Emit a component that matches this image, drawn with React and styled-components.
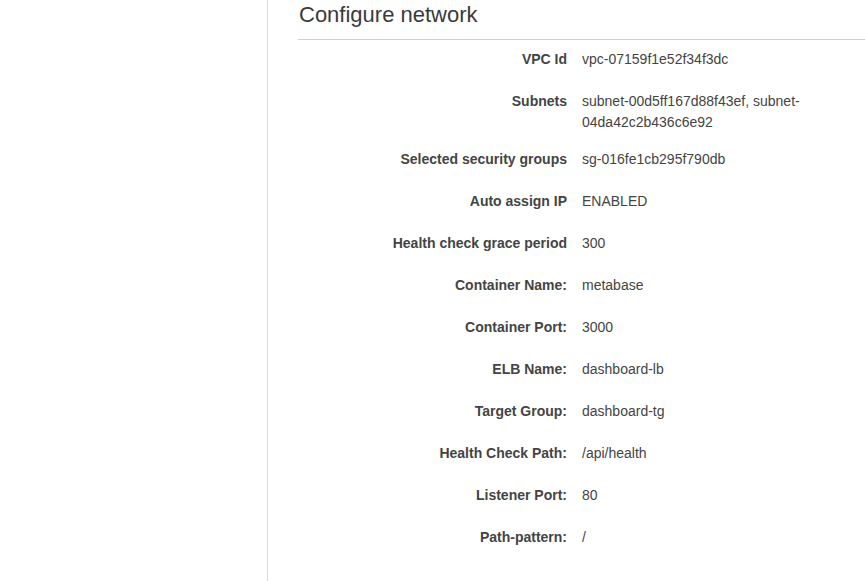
import React from "react";
import styled, { createGlobalStyle } from "styled-components";

const GlobalStyle = createGlobalStyle`
  html, body {
    margin: 0;
    padding: 0;
    background: #fff;
  }
  body {
    font-family: "Liberation Sans", Arial, sans-serif;
    color: #444;
  }
`;

const Page = styled.div`
  display: flex;
  height: 100vh;
  overflow: hidden;
`;

const Sidebar = styled.aside`
  width: 267px;
  flex-shrink: 0;
  border-right: 1px solid #dcdcdc;
`;

const Main = styled.main`
  flex: 1;
  padding-left: 30px;
  min-width: 0;
`;

const Title = styled.h2`
  margin: 0;
  padding: 2px 0 11px 1px;
  font-size: 22px;
  line-height: 26px;
  font-weight: 400;
  color: #3a3a3a;
  border-bottom: 1px solid #cfcfcf;
`;

const Details = styled.dl`
  display: grid;
  grid-template-columns: 269px 1fr;
  column-gap: 15px;
  margin: 9px 0 0;
  padding-right: 45px;
`;

const Label = styled.dt`
  min-height: 42px;
  box-sizing: border-box;
  padding-bottom: 16px;
  text-align: right;
  font-size: 14px;
  line-height: 21px;
  font-weight: 700;
  color: #444;
`;

const Value = styled.dd`
  margin: 0;
  min-height: 42px;
  box-sizing: border-box;
  padding-bottom: 16px;
  font-size: 14px;
  line-height: 21px;
  color: #444;
  overflow-wrap: break-word;
`;

const rows = [
  ["VPC Id", "vpc-07159f1e52f34f3dc"],
  ["Subnets", "subnet-00d5ff167d88f43ef, subnet-04da42c2b436c6e92"],
  ["Selected security groups", "sg-016fe1cb295f790db"],
  ["Auto assign IP", "ENABLED"],
  ["Health check grace period", "300"],
  ["Container Name:", "metabase"],
  ["Container Port:", "3000"],
  ["ELB Name:", "dashboard-lb"],
  ["Target Group:", "dashboard-tg"],
  ["Health Check Path:", "/api/health"],
  ["Listener Port:", "80"],
  ["Path-pattern:", "/"],
];

const App = () => (
  <>
    <GlobalStyle />
    <Page>
      <Sidebar />
      <Main>
        <Title>Configure network</Title>
        <Details>
          {rows.map(([label, value]) => (
            <React.Fragment key={label}>
              <Label>{label}</Label>
              <Value>{value}</Value>
            </React.Fragment>
          ))}
        </Details>
      </Main>
    </Page>
  </>
);

export default App;
